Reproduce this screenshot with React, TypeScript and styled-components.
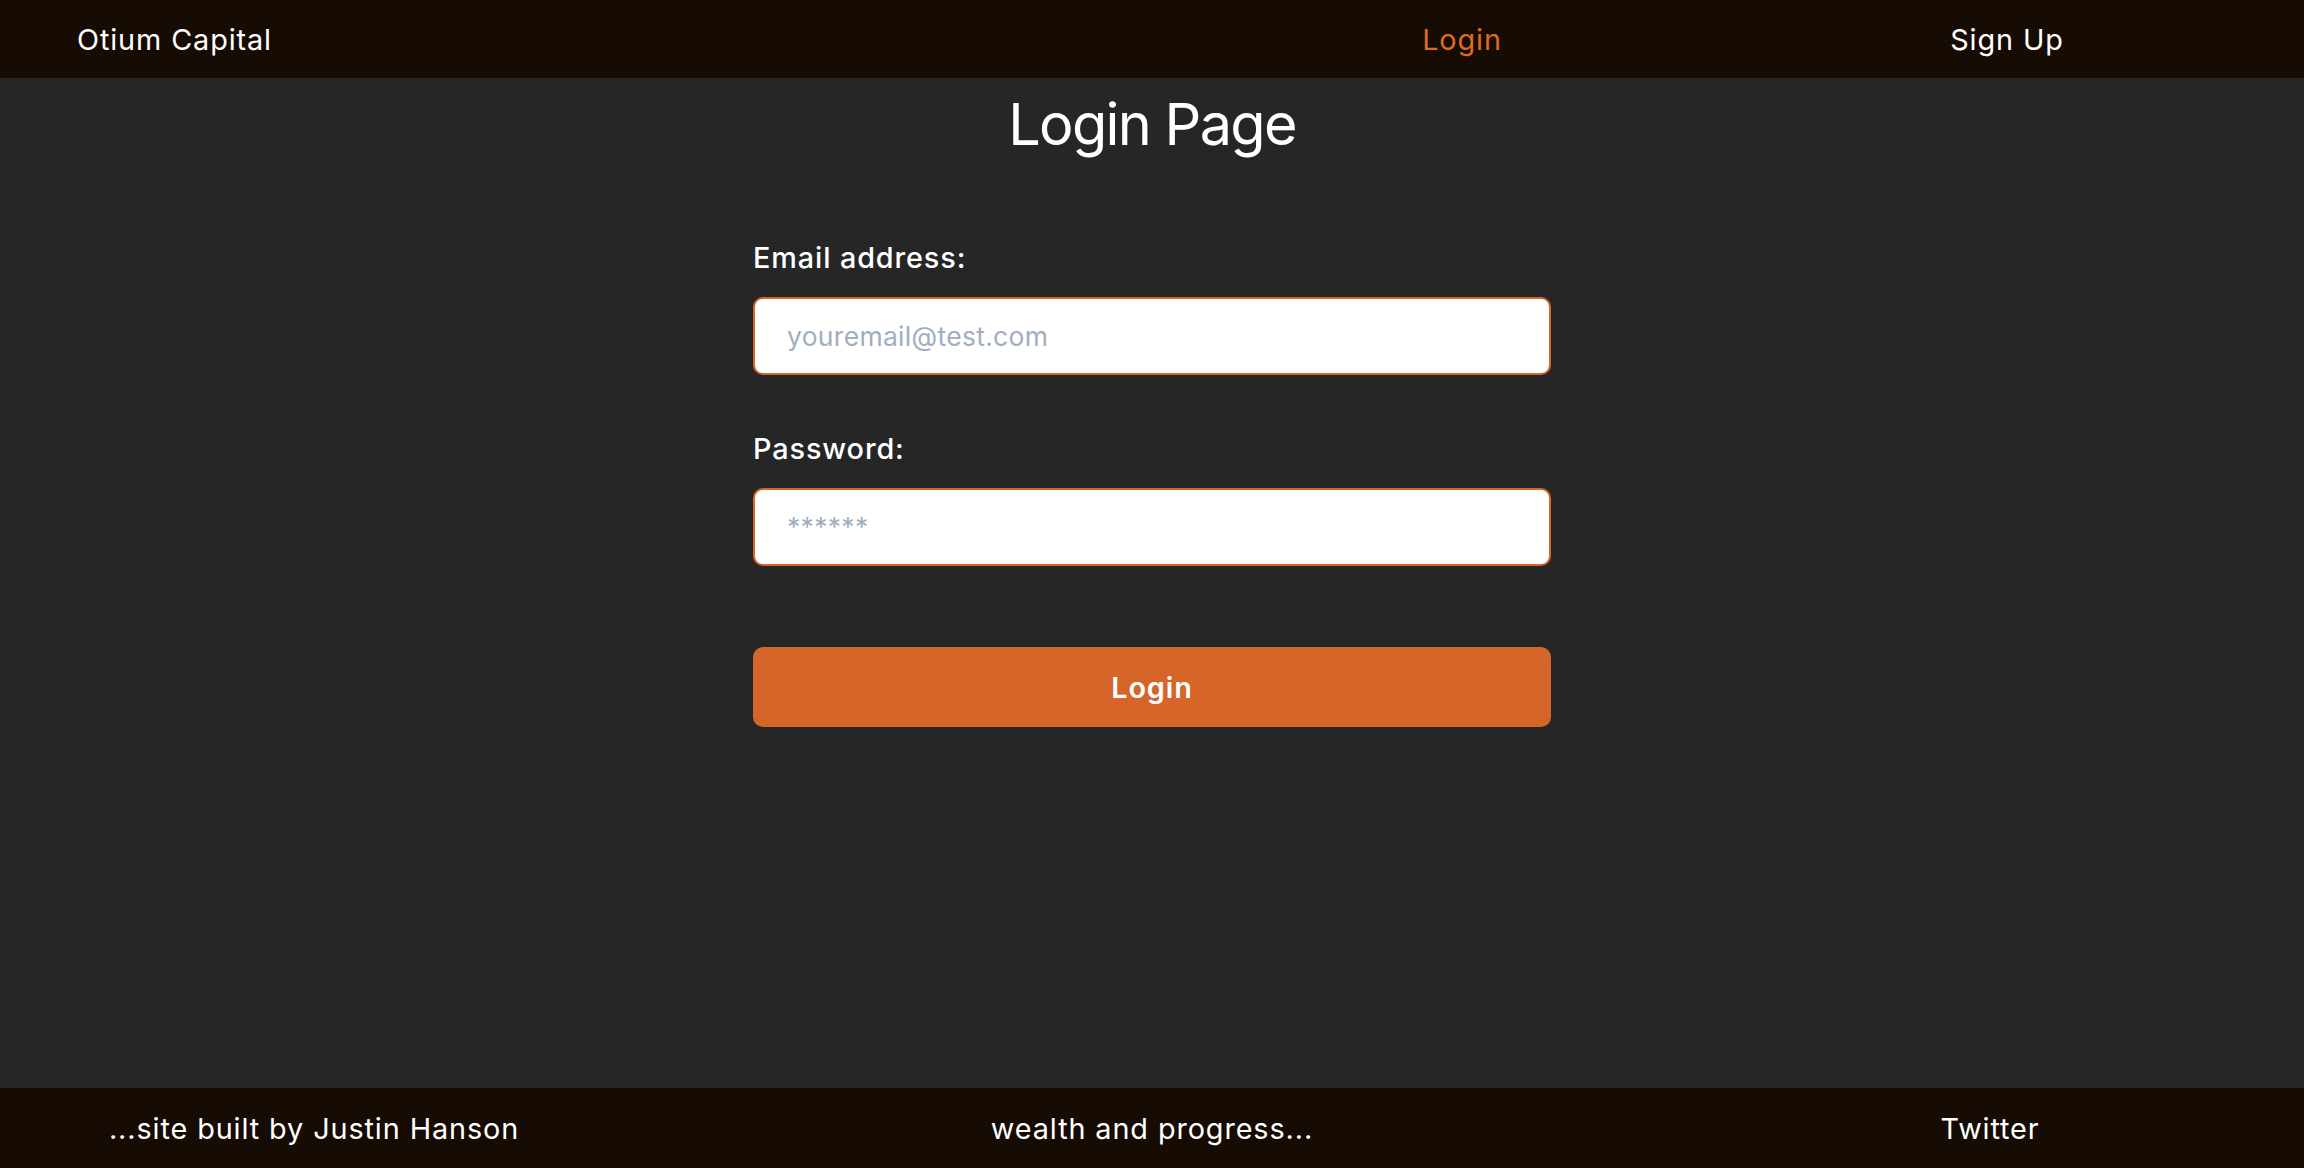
import React from "react";
import styled, { createGlobalStyle } from "styled-components";

const GlobalStyle = createGlobalStyle`
  html, body {
    margin: 0;
    padding: 0;
    background: #262626;
  }
  body {
    font-family: Inter, "Noto Sans", "Liberation Sans", sans-serif;
    color: #ffffff;
    letter-spacing: 0.9px;
  }
  * { box-sizing: border-box; }
`;

const Page = styled.div`
  min-height: 100vh;
  display: flex;
  flex-direction: column;
  background: #262626;
`;

const Header = styled.header`
  height: 78px;
  background: #170c03;
  display: flex;
  align-items: center;
  padding: 0 97px 0 77px;
`;

const Brand = styled.div`
  font-size: 28.8px;
  color: #ffffff;
  flex: 1;
  white-space: nowrap;
`;

const Nav = styled.nav`
  display: flex;
  align-items: center;
  gap: 145px;
`;

const NavLink = styled.a<{ $active?: boolean }>`
  width: 400px;
  text-align: center;
  font-size: 28.8px;
  white-space: nowrap;
  color: ${(p) => (p.$active ? "#dd6b20" : "#ffffff")};
  text-decoration: none;
  cursor: pointer;
`;

const Main = styled.main`
  flex: 1;
  display: flex;
  flex-direction: column;
  align-items: center;
  padding-top: 12px;
`;

const Title = styled.h1`
  margin: 0;
  font-size: 57.6px;
  font-weight: 400;
  line-height: 1.2;
  letter-spacing: -1.7px;
  color: #ffffff;
`;

const Form = styled.form`
  width: 798px;
  margin-top: 77px;
  display: flex;
  flex-direction: column;
`;

const Field = styled.div<{ $gapAfter: number }>`
  display: flex;
  flex-direction: column;
  margin-bottom: ${(p) => p.$gapAfter}px;
`;

const Label = styled.label`
  font-size: 28.8px;
  font-weight: 500;
  line-height: 1.5;
  margin-bottom: 18px;
  color: #ffffff;
`;

const Input = styled.input`
  height: 78px;
  width: 100%;
  border: 2px solid #d6652a;
  border-radius: 10px;
  background: #ffffff;
  padding: 0 32px;
  font-family: Inter, "Noto Sans", "Liberation Sans", sans-serif;
  font-size: 26.5px;
  letter-spacing: 0.3px;
  color: #1a202c;
  outline: none;
  &::placeholder {
    color: #a0aec0;
  }
`;

const Button = styled.button`
  height: 80px;
  width: 100%;
  border: none;
  border-radius: 10px;
  background: #d6652a;
  color: #ffffff;
  font-family: Inter, "Noto Sans", "Liberation Sans", sans-serif;
  font-size: 28.8px;
  font-weight: 600;
  letter-spacing: 0.9px;
  cursor: pointer;
`;

const Footer = styled.footer`
  height: 80px;
  background: #170c03;
  display: flex;
  align-items: center;
  justify-content: space-between;
  padding: 0 94px;
`;

const FooterItem = styled.div`
  width: 440px;
  text-align: center;
  white-space: nowrap;
  font-size: 28.8px;
  color: #ffffff;
`;

export default function App() {
  return (
    <>
      <GlobalStyle />
      <Page>
        <Header>
          <Brand>Otium Capital</Brand>
          <Nav>
            <NavLink $active>Login</NavLink>
            <NavLink>Sign Up</NavLink>
          </Nav>
        </Header>
        <Main>
          <Title>Login Page</Title>
          <Form onSubmit={(e) => e.preventDefault()}>
            <Field $gapAfter={52}>
              <Label htmlFor="email">Email address:</Label>
              <Input id="email" type="email" placeholder="youremail@test.com" />
            </Field>
            <Field $gapAfter={81}>
              <Label htmlFor="password">Password:</Label>
              <Input id="password" type="password" placeholder="******" />
            </Field>
            <Button type="submit">Login</Button>
          </Form>
        </Main>
        <Footer>
          <FooterItem>...site built by Justin Hanson</FooterItem>
          <FooterItem>wealth and progress...</FooterItem>
          <FooterItem>Twitter</FooterItem>
        </Footer>
      </Page>
    </>
  );
}
